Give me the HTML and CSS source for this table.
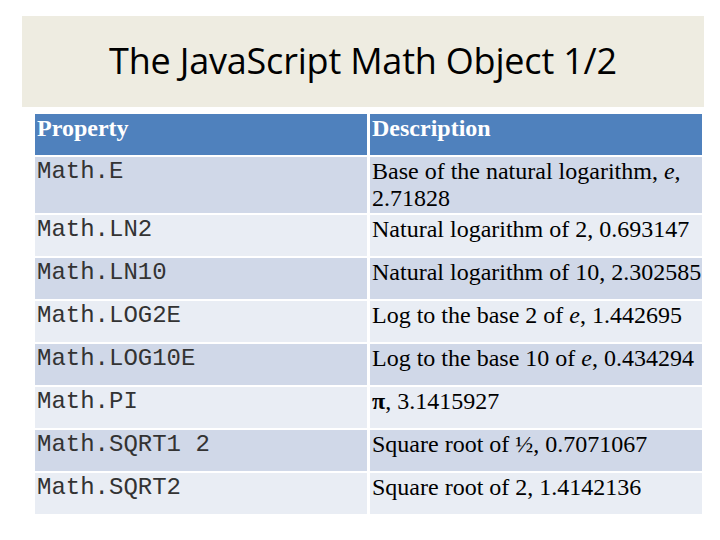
FILE: index.html
```html
<!DOCTYPE html>
<html>
<head>
<meta charset="utf-8">
<link rel="stylesheet" href="styles.css">
</head>
<body>
<div class="slide">
  <div class="title-band"><h1 class="title">The JavaScript Math Object 1/2</h1></div>
  <table class="props">
    <thead>
      <tr class="head"><th class="cell">Property</th><th class="cell">Description</th></tr>
    </thead>
    <tbody>
      <tr class="dark tall"><td class="cell code">Math.E</td><td class="cell desc">Base of the natural logarithm, <i>e</i>,<br>2.71828</td></tr>
      <tr class="light"><td class="cell code">Math.LN2</td><td class="cell desc">Natural logarithm of 2, 0.693147</td></tr>
      <tr class="dark"><td class="cell code">Math.LN10</td><td class="cell desc">Natural logarithm of 10, 2.302585</td></tr>
      <tr class="light"><td class="cell code">Math.LOG2E</td><td class="cell desc">Log to the base 2 of <i>e</i>, 1.442695</td></tr>
      <tr class="dark"><td class="cell code">Math.LOG10E</td><td class="cell desc">Log to the base 10 of <i>e</i>, 0.434294</td></tr>
      <tr class="light"><td class="cell code">Math.PI</td><td class="cell desc"><b>π</b>, 3.1415927</td></tr>
      <tr class="dark"><td class="cell code">Math.SQRT1 2</td><td class="cell desc">Square root of ½, 0.7071067</td></tr>
      <tr class="light"><td class="cell code">Math.SQRT2</td><td class="cell desc">Square root of 2, 1.4142136</td></tr>
    </tbody>
  </table>
</div>
</body>
</html>
```
FILE: styles.css
```css
html, body {
  margin: 0;
  padding: 0;
  background: #ffffff;
}
.slide {
  width: 720px;
  height: 540px;
  padding-top: 16px;
  box-sizing: border-box;
}
.title-band {
  margin-left: 22px;
  width: 682px;
  height: 91px;
  background: #eeece1;
  display: flex;
  align-items: center;
  justify-content: center;
}
.title {
  margin: 0;
  font-family: "Open Sans", "Noto Sans", sans-serif;
  font-weight: 400;
  font-size: 36px;
  color: #000;
  letter-spacing: -0.2px;
  padding-bottom: 3px;
}
.props {
  margin-top: 5px;
  margin-left: 32px;
  border-collapse: separate;
  border-spacing: 3px 2px;
  table-layout: fixed;
  width: 673px;
}
.cell {
  width: 328px;
  height: 40px;
  padding: 1px 2px 0 2px;
  text-align: left;
  vertical-align: top;
  font-family: "Liberation Serif", "Times New Roman", serif;
  font-size: 24px;
  line-height: 27px;
  color: #000;
}
.head .cell {
  background: #4f81bd;
  color: #fff;
  font-weight: 700;
}
.tall .cell {
  height: 55px;
}
.dark .cell {
  background: #d0d8e8;
}
.light .cell {
  background: #e9edf4;
}
.code {
  font-family: "Liberation Mono", "Courier New", monospace;
  font-size: 24px;
  color: #333;
}
.desc {
  white-space: nowrap;
}
.desc b {
  font-weight: 700;
}
```
